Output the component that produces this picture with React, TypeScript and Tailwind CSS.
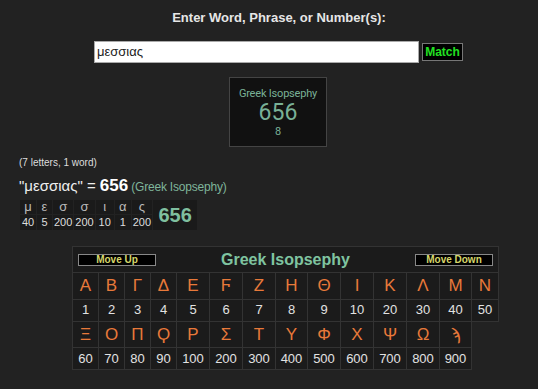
const top = [
  ['Α', '1'], ['Β', '2'], ['Γ', '3'], ['Δ', '4'], ['Ε', '5'], ['Ϝ', '6'], ['Ζ', '7'],
  ['Η', '8'], ['Θ', '9'], ['Ι', '10'], ['Κ', '20'], ['Λ', '30'], ['Μ', '40'], ['Ν', '50'],
];
const bottom = [
  ['Ξ', '60'], ['Ο', '70'], ['Π', '80'], ['Ϙ', '90'], ['Ρ', '100'], ['Σ', '200'], ['Τ', '300'],
  ['Υ', '400'], ['Φ', '500'], ['Χ', '600'], ['Ψ', '700'], ['Ω', '800'], ['ϡ', '900'],
];
const widths = [26, 26, 26, 26, 33, 33, 33, 32, 33, 33, 33, 33, 32, 27];
const word = [
  ['μ', '40', 17], ['ε', '5', 16], ['σ', '200', 20], ['σ', '200', 20],
  ['ι', '10', 19], ['α', '1', 17], ['ς', '200', 20],
] as const;

const cell = 'border border-[#333] bg-[#1b1b1b] text-center p-0';

export default function App() {
  return (
    <div className="w-[538px] h-[389px] bg-[#222] text-[#ddd] font-['Liberation_Sans',Arial,sans-serif] overflow-hidden">
      <div className="pt-[10px] pl-[20px] text-center text-[13px] leading-[16px] font-bold text-[#e6e6e6]">
        Enter Word, Phrase, or Number(s):
      </div>

      <div className="mt-[15px] ml-[94px] flex items-center gap-[3px]">
        <div className="w-[325px] h-[22px] bg-white border border-[#aaa] flex items-center px-[2px] text-[13px] text-[#222]">
          μεσσιας
        </div>
        <button className="w-[41px] h-[18px] bg-black border border-[#777] text-[#22e022] text-[12px] font-bold leading-none">
          Match
        </button>
      </div>

      <div className="mt-[14px] ml-[229px] w-[98px] h-[70px] bg-[#111] border border-[#444] flex flex-col items-center font-['Roboto',sans-serif] text-[#79b096]">
        <div className="mt-[9px] text-[11px] leading-[13px] tracking-[-0.2px]">Greek Isopsephy</div>
        <div className="mt-[1px] text-[23px] leading-[24px]">656</div>
        <div className="text-[11px] leading-[13px]">8</div>
      </div>

      <div className="mt-[10px] ml-[19px] text-[10px] leading-[12px] text-[#ddd]">(7 letters, 1 word)</div>

      <div className="mt-[8px] ml-[19px] flex items-baseline leading-[18px]">
        <span className="text-[15px] text-[#eee]">"μεσσιας" =&nbsp;</span>
        <span className="text-[17px] font-bold text-white">656</span>
        <span className="ml-[3px] text-[12px] tracking-[-0.2px] text-[#7fb59a]">(Greek Isopsephy)</span>
      </div>

      <table className="mt-[3px] ml-[19px] border-collapse">
        <tbody>
          <tr className="h-[14px]">
            {word.map(([l, , w], i) => (
              <td key={i} style={{ width: w }} className="border border-[#222] bg-[#1a1a1a] text-center text-[13px] leading-[13px] text-[#bbb] px-[1px] py-0">{l}</td>
            ))}
            <td rowSpan={2} className="w-[45px] border border-[#222] bg-[#1a1a1a] text-center text-[20px] font-bold text-[#7fbf9f] p-0">656</td>
          </tr>
          <tr className="h-[15px]">
            {word.map(([, n], i) => (
              <td key={i} className="border border-[#222] bg-[#1a1a1a] text-center text-[11px] leading-[13px] text-[#ddd] px-[1px] py-0">{n}</td>
            ))}
          </tr>
        </tbody>
      </table>

      <table className="mt-[15px] ml-[72px] border-collapse table-fixed">
        <colgroup>
          {widths.map((w, i) => <col key={i} style={{ width: w }} />)}
        </colgroup>
        <tbody>
          <tr className="h-[26px]">
            <td colSpan={14} className="border border-[#333] bg-[#1b1b1b] p-0">
              <div className="flex items-center justify-between px-[5px]">
                <button className="w-[78px] h-[12px] bg-black border border-[#888] text-[10px] leading-none font-bold text-[#d6d66a]">Move Up</button>
                <span className="text-[16px] font-bold text-[#7fc4a0]">Greek Isopsephy</span>
                <button className="w-[78px] h-[12px] bg-black border border-[#888] text-[10px] leading-none font-bold text-[#d6d66a]">Move Down</button>
              </div>
            </td>
          </tr>
          <tr className="h-[26px]">
            {top.map(([l], i) => <td key={i} className={`${cell} text-[17px] text-[#e8793a]`}>{l}</td>)}
          </tr>
          <tr className="h-[22px]">
            {top.map(([, n], i) => <td key={i} className={`${cell} text-[13px] text-[#e2e2e2]`}>{n}</td>)}
          </tr>
          <tr className="h-[26px]">
            {bottom.map(([l], i) => <td key={i} className={`${cell} text-[17px] text-[#e8793a]`}>{l}</td>)}
          </tr>
          <tr className="h-[22px]">
            {bottom.map(([, n], i) => <td key={i} className={`${cell} text-[13px] text-[#e2e2e2]`}>{n}</td>)}
          </tr>
        </tbody>
      </table>
    </div>
  );
}
